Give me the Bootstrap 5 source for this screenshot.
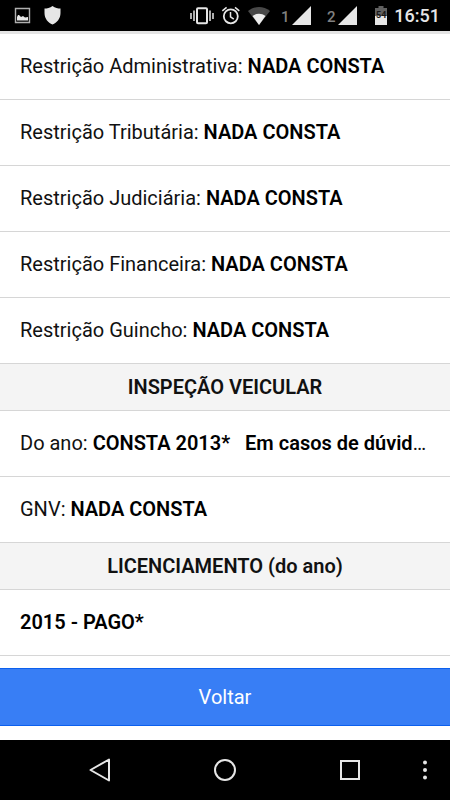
<!DOCTYPE html>
<html lang="pt-BR">
<head>
<meta charset="utf-8">
<meta name="viewport" content="width=device-width, initial-scale=1">
<title>Consulta de veículo</title>
<link href="https://cdn.jsdelivr.net/npm/bootstrap@5.3.0/dist/css/bootstrap.min.css" rel="stylesheet">
<style>
  body { font-family: Roboto, "Liberation Sans", sans-serif; font-size: 20px; line-height: 24px; color: #000; background: #fff; }
  strong { font-weight: 600; }
  svg { display: block; flex: none; }
  .status-bar { height: 31px; padding: 0 10px 0 14px; }
  .clock { font-size: 18px; font-weight: 500; color: #e6e6e6; margin-left: 6px; }
  .sim { font-size: 15px; font-weight: 500; }
  .notices { gap: 13px; }
  .results { border-top: 3px solid #e4e4e4; overflow: hidden; }
  .results .list-group-item { padding: 20px 20px 21px; border-width: 0 0 1px; border-color: #d6d6d6; color: #111; }
  .results .list-group-item strong { color: #000; }
  .results .list-group-item:last-child { border-bottom-width: 1px; }
  .results .divider { padding: 11px 20px; background: #f4f4f4; font-weight: 600; }
  .back-btn { --bs-btn-bg: #387ef5; --bs-btn-border-color: #0c60ee; --bs-btn-hover-bg: #0c60ee; --bs-btn-color: #fff; --bs-btn-font-size: 20px; --bs-btn-padding-y: 16px; line-height: 24px; margin-bottom: 14px; }
  .nav-keys { height: 60px; }
  .nav-main { width: 83.333%; padding: 0 12px 0 87px; }
</style>
<script src="https://cdn.jsdelivr.net/npm/bootstrap@5.3.0/dist/js/bootstrap.bundle.min.js"></script>
</head>
<body class="d-flex flex-column vh-100 overflow-hidden">
<header class="status-bar d-flex align-items-center justify-content-between bg-black flex-shrink-0">
  <div class="notices d-flex align-items-center">
    <svg width="17" height="17" viewBox="0 0 17 17" aria-hidden="true"><path d="M1.500 1.500h14v14h-14z" fill="none" stroke="#b0b0b0" stroke-width="1.400"/><path d="M3 13.500V10l1-2h1l2 2 2-1 2 1.500 3-.5v3.500z" fill="#e8e8e8"/></svg>
    <svg width="17" height="19" viewBox="0 0 17 19" aria-hidden="true"><path d="M8.500 0C6 1.800 3 2.500.5 2.600V7c0 5.500 3.500 9.800 8 11.500 4.500-1.700 8-6 8-11.500V2.600C14 2.500 11 1.800 8.500 0z" fill="#e6e6e6"/></svg>
  </div>
  <div class="d-flex align-items-center">
    <svg width="180" height="22" viewBox="190 5 180 22" role="img" aria-label="Vibrar, alarme, Wi-Fi e sinal">
      <g fill="none" stroke="#e6e6e6" stroke-width="1.500"><rect x="197" y="8.200" width="10" height="15" rx="1" stroke-width="2"/><path d="M194 10.500v10.500M191 13v6M210 10.500v10.500M213 13v6"/>
      <circle cx="230.800" cy="16.300" r="7" stroke-width="1.800"/><path d="M230.500 12v4.800l3.300 2.300M222.300 10.800l4.300-3.500M239.300 10.800l-4.300-3.500"/></g>
      <path d="M248 11c6.500-5.400 15.500-5.400 22 0l-11 14z" fill="#484848"/><path d="M252.500 16c4-3 9-3 13 0l-6.500 9z" fill="#eee"/>
      <path d="M311 6v19h-19zM357 6v19h-19z" fill="#e6e6e6"/>
      <g class="sim" fill="#808080"><text x="281" y="22">1</text><text x="327" y="22">2</text></g>
    </svg>
    <svg width="18" height="22" viewBox="370 5 18 22" role="img" aria-label="Bateria 54%"><path d="M375 8h3.500V6h5v2h3.500v8h-12z" fill="#606060"/><path d="M375 16h12v9h-12z" fill="#e6e6e6"/><text x="376" y="18" font-size="9" font-weight="700" fill="#181818">54</text></svg>
    <span class="clock">16:51</span>
  </div>
</header>
<main class="results flex-grow-1">
  <ul class="list-group list-group-flush">
    <li class="list-group-item text-truncate">Restrição Administrativa: <strong>NADA CONSTA</strong></li>
    <li class="list-group-item text-truncate">Restrição Tributária: <strong>NADA CONSTA</strong></li>
    <li class="list-group-item text-truncate">Restrição Judiciária: <strong>NADA CONSTA</strong></li>
    <li class="list-group-item text-truncate">Restrição Financeira: <strong>NADA CONSTA</strong></li>
    <li class="list-group-item text-truncate">Restrição Guincho: <strong>NADA CONSTA</strong></li>
    <li class="list-group-item divider text-center">INSPEÇÃO VEICULAR</li>
    <li class="list-group-item text-truncate">Do ano: <strong>CONSTA 2013* &nbsp; Em casos de dúvid</strong>…</li>
    <li class="list-group-item text-truncate">GNV: <strong>NADA CONSTA</strong></li>
    <li class="list-group-item divider text-center">LICENCIAMENTO (do ano)</li>
    <li class="list-group-item text-truncate"><strong>2015 - PAGO*</strong></li>
  </ul>
</main>
<button type="button" class="btn back-btn w-100 rounded-0 border-start-0 border-end-0 flex-shrink-0">Voltar</button>
<nav class="nav-keys d-flex align-items-center bg-black flex-shrink-0" aria-label="Sistema">
  <div class="nav-main d-flex justify-content-between">
    <button type="button" class="btn p-0 border-0" aria-label="Voltar"><svg width="26" height="26" viewBox="0 0 26 26"><path d="M22 2.500v21L3.500 13z" fill="none" stroke="#e6e6e6" stroke-width="2" stroke-linejoin="round"/></svg></button>
    <button type="button" class="btn p-0 border-0" aria-label="Início"><svg width="26" height="26" viewBox="0 0 26 26"><circle cx="13" cy="13" r="10" fill="none" stroke="#e6e6e6" stroke-width="2"/></svg></button>
    <button type="button" class="btn p-0 border-0" aria-label="Recentes"><svg width="26" height="26" viewBox="0 0 26 26"><rect x="4" y="4" width="18" height="18" fill="none" stroke="#e6e6e6" stroke-width="2"/></svg></button>
  </div>
  <button type="button" class="btn p-0 border-0 ms-auto me-3" aria-label="Mais opções"><svg width="18" height="26" viewBox="0 0 18 26"><g fill="#e6e6e6"><circle cx="9" cy="5.500" r="2"/><circle cx="9" cy="13" r="2"/><circle cx="9" cy="20.500" r="2"/></g></svg></button>
</nav>
</body>
</html>
